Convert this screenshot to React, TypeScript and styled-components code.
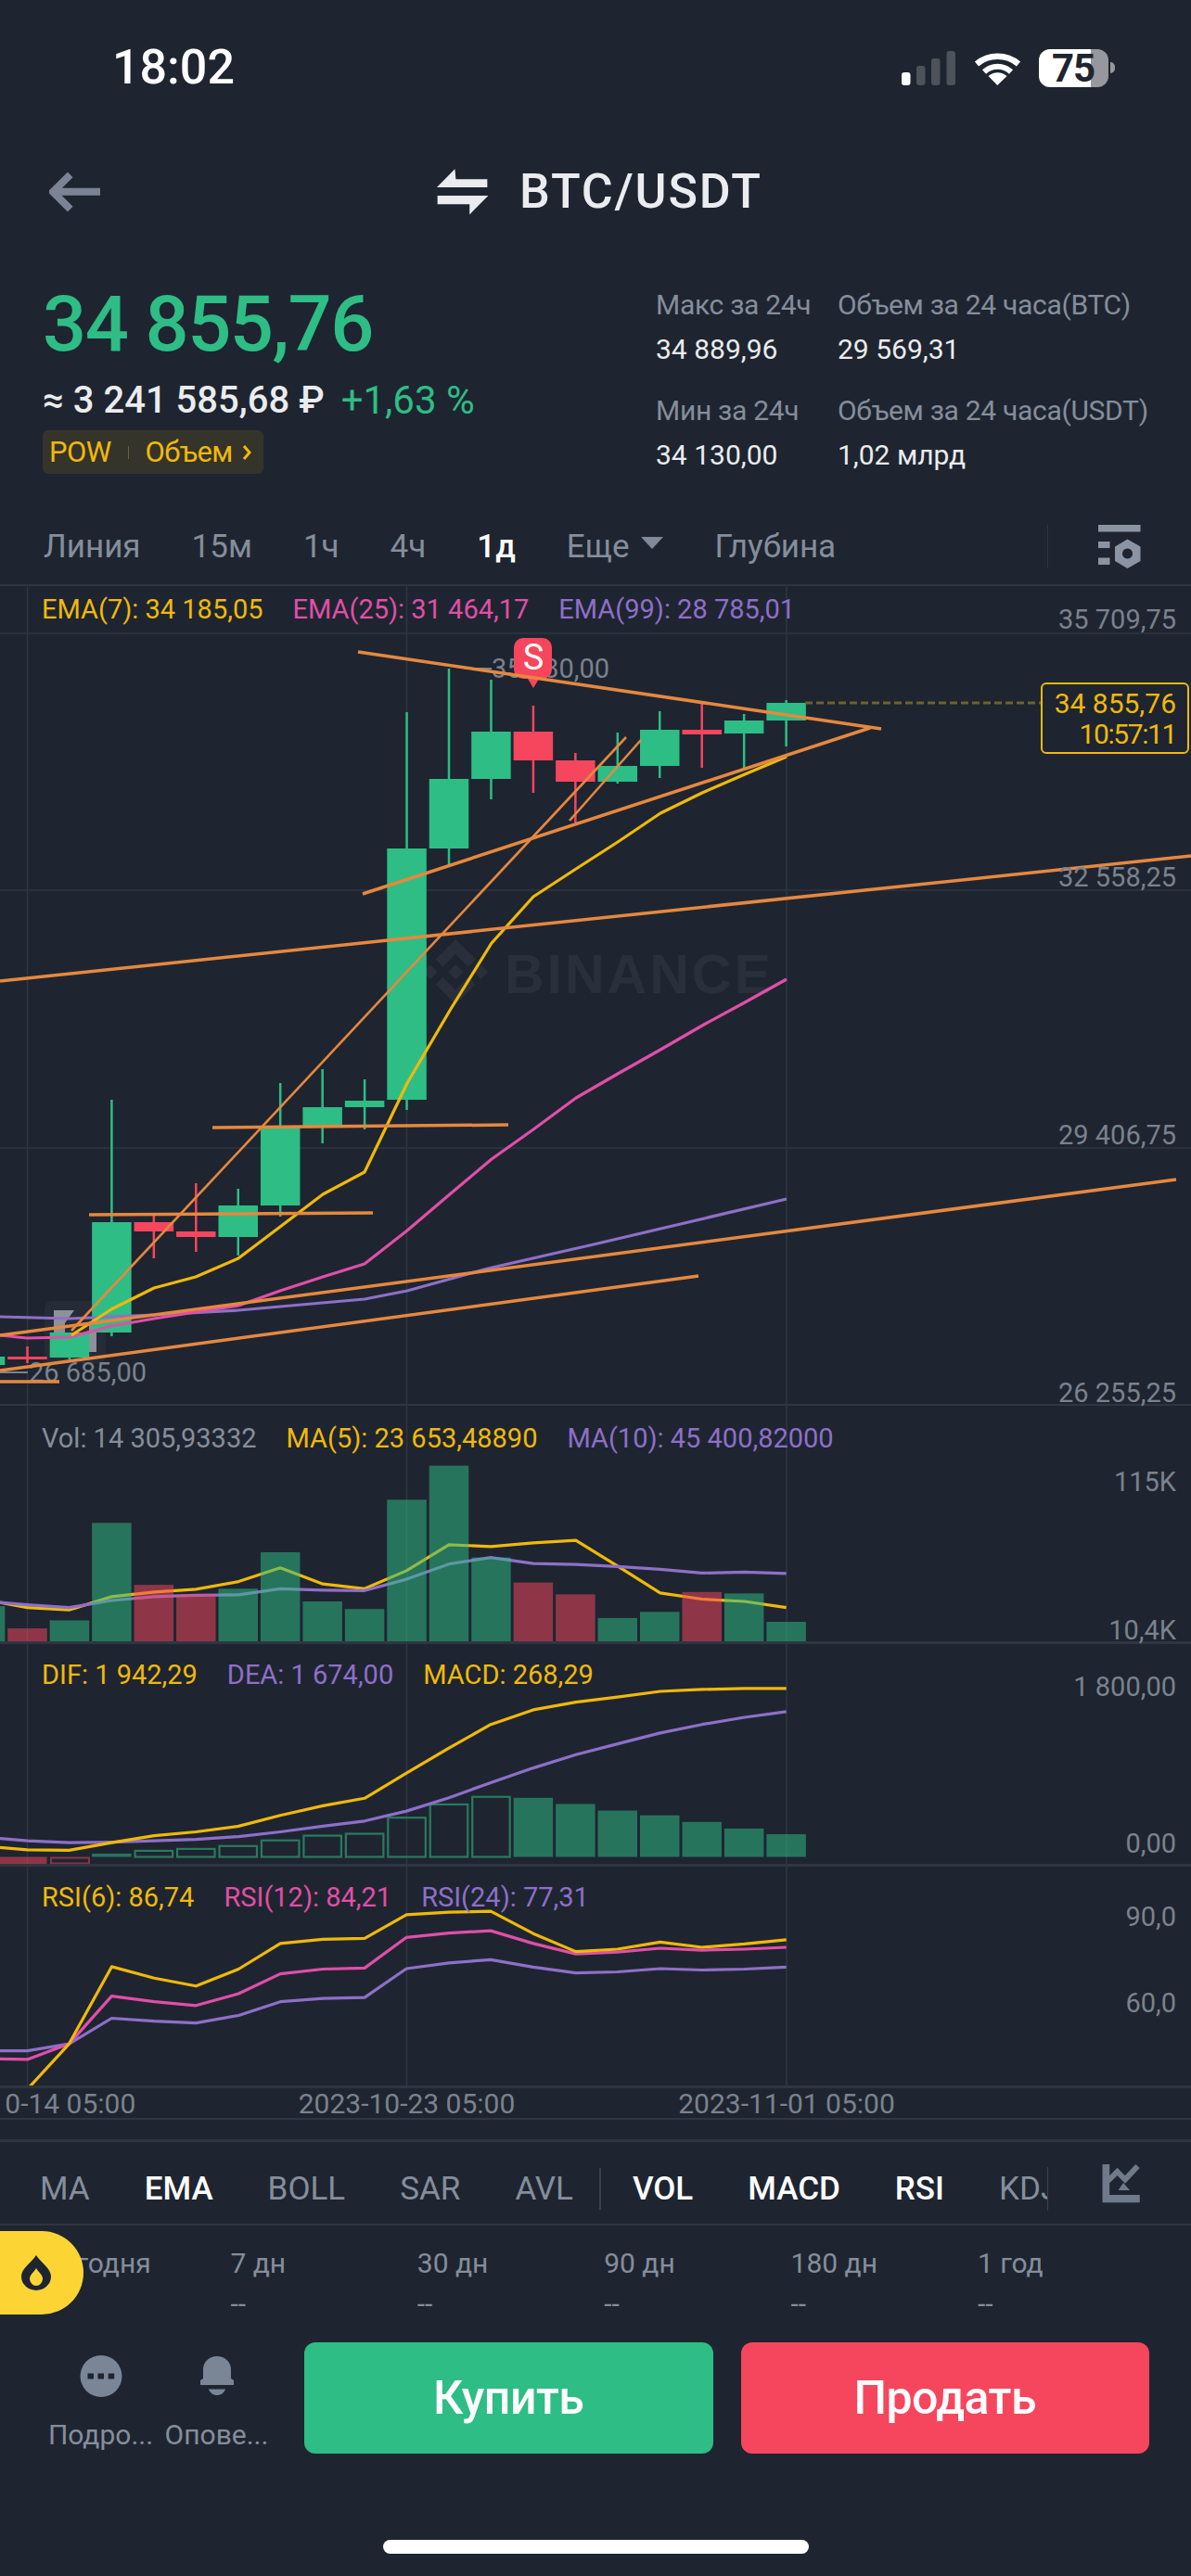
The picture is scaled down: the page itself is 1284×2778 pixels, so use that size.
import React from "react";
import styled, { createGlobalStyle } from "styled-components";

const BG = "#1e2530";
const GRID = "#2f3641";
const MUTED = "#848e9c";
const AXIS = "#7a828e";
const WHITE = "#eaecef";
const GREEN = "#2ebd85";
const RED = "#f6465d";
const YELLOW = "#f0b90b";
const PINK = "#e04fa8";
const PURPLE = "#8e6fc9";
const ORANGE = "#e6883f";

const GlobalStyle = createGlobalStyle`
  html, body { margin: 0; padding: 0; background: ${BG}; }
  #root { width: 1284px; }
  * { box-sizing: border-box; }
`;

const Page = styled.div`
  position: relative;
  width: 1284px;
  height: 2778px;
  overflow: hidden;
  background: ${BG};
  color: ${WHITE};
  font-family: Roboto, "Liberation Sans", sans-serif;
`;

/* Status bar */
const StatusBar = styled.header`
  height: 146px;
  display: flex;
  align-items: center;
  padding: 0 82px 0 121px;
`;
const Clock = styled.div`
  font-size: 52px;
  font-weight: 500;
  color: #fff;
  line-height: 1;
  margin-right: auto;
`;
const SignalBars = styled.svg`
  width: 58px;
  height: 37px;
  margin-right: 20px;
`;
const WifiIcon = styled.svg`
  width: 51px;
  height: 37px;
  margin-right: 19px;
`;
const Battery = styled.div`
  width: 75px;
  height: 41px;
  border-radius: 12px;
  background: linear-gradient(90deg, #fff 0 75%, #96989d 75% 100%);
  color: ${BG};
  font-size: 42px;
  font-weight: 700;
  font-stretch: 88%;
  line-height: 41px;
  padding-left: 14px;
  letter-spacing: -1px;
`;
const BatteryTip = styled.div`
  width: 5px;
  height: 12px;
  margin-left: 2px;
  border-radius: 0 6px 6px 0;
  background: #96989d;
`;

/* Nav */
const NavBar = styled.nav`
  height: 122px;
  padding-left: 53px;
  display: flex;
  align-items: center;
`;
const BackIcon = styled.svg`
  width: 57px;
  height: 42px;
  margin-right: 361px;
`;
const SwapIcon = styled.svg`
  width: 56px;
  height: 50px;
  margin-right: 33px;
`;
const PairTitle = styled.h1`
  margin: 0;
  font-size: 52px;
  font-weight: 500;
  letter-spacing: 1.8px;
  line-height: 1;
  color: ${WHITE};
`;

/* Ticker */
const Ticker = styled.section`
  height: 272px;
  display: flex;
  padding-left: 46px;
`;
const PriceBlock = styled.div`
  width: 661px;
  padding-top: 40px;
`;
const Price = styled.div`
  font-size: 83px;
  line-height: 84px;
  font-weight: 500;
  font-stretch: 92%;
  letter-spacing: -1.5px;
  color: ${GREEN};
`;
const SubPrice = styled.div`
  margin-top: 18px;
  display: flex;
  gap: 18px;
  font-size: 40px;
  line-height: 44px;
`;
const Fiat = styled.span`
  color: ${WHITE};
  font-stretch: 96%;
  font-weight: 500;
`;
const Change = styled.span`
  color: ${GREEN};
  font-size: 42px;
`;
const TagBadge = styled.div`
  margin-top: 10px;
  width: 238px;
  height: 47px;
  border-radius: 6px;
  padding: 0 13px 0 7px;
  background: #35342b;
  display: flex;
  align-items: center;
  color: ${YELLOW};
  font-size: 31px;
  font-stretch: 90%;
  letter-spacing: -0.6px;
`;
const BadgeSep = styled.span`
  width: 1px;
  height: 14px;
  margin: 0 18px;
  background: #6d6230;
`;
const Chevron = styled.svg`
  width: 10px;
  height: 18px;
  margin-left: auto;
`;
const StatGrid = styled.div`
  padding-top: 45px;
  display: grid;
  grid-template-columns: 196px auto;
  align-content: start;
  row-gap: 34px;
`;
const StatCell = styled.div`
  display: flex;
  flex-direction: column;
  gap: 16px;
`;
const StatLabel = styled.span`
  color: ${MUTED};
  font-size: 30px;
  font-stretch: 93%;
  letter-spacing: -0.3px;
  line-height: 32px;
  white-space: nowrap;
`;
const StatValue = styled.span`
  color: ${WHITE};
  font-size: 30px;
  font-stretch: 94%;
  line-height: 32px;
  white-space: nowrap;
`;

/* Tabs */
const TabsBar = styled.div`
  height: 92px;
  padding: 8px 54px 0 47px;
  display: flex;
  align-items: center;
  gap: 55px;
  border-bottom: 2px solid ${GRID};
`;
const Tab = styled.span<{ $active?: boolean }>`
  font-size: 35px;
  font-stretch: 96%;
  line-height: 1;
  color: ${(p) => (p.$active ? "#fff" : MUTED)};
  font-weight: ${(p) => (p.$active ? 500 : 400)};
  white-space: nowrap;
`;
const TabWithCaret = styled.span`
  display: flex;
  align-items: center;
  gap: 13px;
`;
const Caret = styled.span`
  width: 0;
  height: 0;
  border-left: 12px solid transparent;
  border-right: 12px solid transparent;
  border-top: 13px solid #808a98;
  margin-bottom: 8px;
`;
const ToolDivider = styled.span`
  width: 1px;
  height: 47px;
  background: ${GRID};
  margin-left: auto;
  margin-right: -1px;
`;
const ToolIcon = styled.svg`
  width: 46px;
  height: 47px;
  flex: none;
`;

/* Chart panes */
const Pane = styled.div<{ $h: number; $line?: number }>`
  position: relative;
  height: ${(p) => p.$h}px;
  border-bottom: ${(p) => p.$line ?? 2}px solid ${GRID};
`;
const ChartSvg = styled.svg<{ $h: number }>`
  position: absolute;
  left: 0;
  top: 0;
  width: 1284px;
  height: ${(p) => p.$h}px;
`;
const Legend = styled.div<{ $top: number }>`
  position: relative;
  padding: ${(p) => p.$top}px 0 0 45px;
  display: flex;
  gap: 32px;
  font-size: 29px;
  line-height: 30px;
  white-space: nowrap;
`;
const LegendItem = styled.span<{ $color: string }>`
  color: ${(p) => p.$color};
`;
const AxisLabel = styled.span<{ $y: number }>`
  position: absolute;
  right: 16px;
  top: ${(p) => p.$y}px;
  transform: translateY(-50%);
  font-size: 29px;
  line-height: 24px;
  color: ${AXIS};
  white-space: nowrap;
`;
const PriceTag = styled.div`
  position: absolute;
  right: 2px;
  top: 104px;
  width: 160px;
  height: 77px;
  border: 2px solid ${YELLOW};
  border-radius: 6px;
  padding: 4px 12px 0 0;
  text-align: right;
  color: ${YELLOW};
  font-size: 30px;
  line-height: 33px;
  background: ${BG};
`;
const PriceLine = styled.div<{ $tight?: boolean }>`
  white-space: nowrap;
  letter-spacing: ${(p) => (p.$tight ? "-1.4px" : "0")};
`;
const WatermarkText = styled.text`
  font-family: "Liberation Sans", sans-serif;
  font-size: 59px;
  font-weight: 700;
  letter-spacing: 3px;
  fill: #2a303b;
`;
const ChartLabel = styled.text`
  font-size: 29px;
  fill: ${AXIS};
`;
const MarkerLetter = styled.text`
  font-size: 38px;
  fill: #fff;
  text-anchor: middle;
`;

/* Date row */
const DateRow = styled.div`
  position: relative;
  height: 34px;
  border-bottom: 2px solid ${GRID};
  overflow: hidden;
`;
const DateLabel = styled.span<{ $x: number }>`
  position: absolute;
  left: ${(p) => p.$x}px;
  top: 2px;
  transform: translateX(-50%);
  font-size: 30px;
  line-height: 30px;
  color: ${AXIS};
  white-space: nowrap;
`;

/* Indicator bar */
const IndicatorBar = styled.div`
  margin-top: 21px;
  height: 93px;
  padding: 12px 54px 0 0;
  border-top: 3px solid ${GRID};
  border-bottom: 2px solid ${GRID};
  display: flex;
  align-items: center;
`;
const IndicatorScroll = styled.div`
  width: 1130px;
  flex: none;
  overflow: hidden;
  display: flex;
  align-items: center;
  gap: 59px;
  padding-left: 43px;
  border-right: 1px solid #3a414d;
  height: 47px;
`;
const Indicator = styled.span<{ $active?: boolean }>`
  font-size: 35px;
  font-stretch: 94%;
  line-height: 1;
  color: ${(p) => (p.$active ? "#fff" : MUTED)};
  font-weight: ${(p) => (p.$active ? 500 : 400)};
  white-space: nowrap;
`;
const IndicatorDivider = styled.span`
  flex: none;
  width: 2px;
  height: 45px;
  background: #3a414d;
  margin: 0 -25px 0 -31px;
`;
const IndicatorIcon = styled.svg`
  width: 42px;
  height: 42px;
  margin-left: auto;
  margin-top: -10px;
`;

/* Stats */
const ReturnsRow = styled.div`
  height: 126px;
  padding: 24px 0 0 47px;
  display: grid;
  grid-template-columns: repeat(6, 201.4px);
`;
const ReturnCell = styled.div`
  display: flex;
  flex-direction: column;
  gap: 10px;
`;
const ReturnLabel = styled.span`
  font-size: 30px;
  font-stretch: 95%;
  line-height: 34px;
  color: ${MUTED};
`;
const ReturnValue = styled.span`
  font-size: 30px;
  line-height: 34px;
  color: ${MUTED};
`;
const FireButton = styled.div`
  position: absolute;
  left: 0;
  top: 2406px;
  width: 90px;
  height: 90px;
  border-radius: 0 45px 45px 0;
  background: #fcd535;
  display: flex;
  align-items: center;
  padding-left: 22px;
`;
const DropIcon = styled.svg`
  width: 34px;
  height: 38px;
`;

/* Footer */
const Footer = styled.footer`
  height: 120px;
  padding-left: 46px;
  display: flex;
`;
const ActionItem = styled.div`
  width: 125px;
  padding-top: 14px;
  display: flex;
  flex-direction: column;
  align-items: center;
  gap: 24px;
`;
const ActionIcon = styled.svg`
  width: 46px;
  height: 45px;
`;
const ActionLabel = styled.span`
  font-size: 30px;
  font-stretch: 95%;
  line-height: 34px;
  color: ${MUTED};
  white-space: nowrap;
`;
const TradeButton = styled.button<{ $bg: string; $gap: number }>`
  width: 440.5px;
  height: 120px;
  margin-left: ${(p) => p.$gap}px;
  border: 0;
  border-radius: 12px;
  background: ${(p) => p.$bg};
  color: #fff;
  font-family: inherit;
  font-stretch: 92%;
  font-size: 50px;
  font-weight: 500;
  letter-spacing: -0.5px;
`;
const HomeIndicator = styled.div`
  width: 459px;
  height: 15px;
  margin: 93px auto 0;
  border-radius: 8px;
  background: #fff;
`;

/* Data */
const CX = (i: number) => 29.5 + 45.45 * i;
type Candle = [number, number, number, number, number, "g" | "r"];
const candles: Candle[] = [
  [-1, 1463, 1472, 1460, 1475, "g"],
  [0, 1463, 1466, 1452, 1470, "r"],
  [1, 1437, 1464, 1437, 1466, "g"],
  [2, 1318, 1437, 1186, 1441, "g"],
  [3, 1318, 1328, 1311, 1357, "r"],
  [4, 1328, 1334, 1276, 1350, "r"],
  [5, 1300, 1334, 1282, 1354, "g"],
  [6, 1216, 1300, 1168, 1312, "g"],
  [7, 1194, 1216, 1153, 1233, "g"],
  [8, 1187, 1194, 1164, 1218, "g"],
  [9, 915, 1186, 768, 1197, "g"],
  [10, 840, 915, 721, 934, "g"],
  [11, 789, 840, 733, 862, "g"],
  [12, 789, 820, 761, 855, "r"],
  [13, 820, 843, 812, 887, "r"],
  [14, 826, 843, 790, 845, "g"],
  [15, 787, 826, 767, 839, "g"],
  [16, 787, 792, 759, 828, "r"],
  [17, 777, 791, 770, 828, "g"],
  [18, 758, 777, 755, 805, "g"],
];

const ema7 = "77,1440 120,1412 166,1389 211,1377 257,1357 302,1323 348,1288 393,1264 439,1168 486,1088 530,1017 575,967 621,937 666,908 712,877 757,855 803,835 848,816";
const ema25 = "0,1440 29,1443 75,1442 120,1430 166,1422 211,1415 257,1408 302,1392 348,1377 393,1363 439,1327 486,1287 530,1250 575,1218 621,1184 666,1158 712,1132 757,1106 803,1081 848,1056";
const ema99 = "0,1420 75,1422 166,1418 257,1413 393,1401 439,1392 526,1368 640,1342 848,1293";

const orangeThick: [number, number, number, number][] = [
  [386, 703, 950, 786],
  [391, 964, 938, 785],
  [0, 1058, 1284, 923],
  [0, 1440, 1268, 1272],
  [0, 1478, 753, 1376],
  [96, 1310, 402, 1308],
  [229, 1216, 548, 1213],
  [0, 1490, 64, 1490],
];
const orangeThin: [number, number, number, number][] = [
  [77, 1435, 675, 795],
  [614, 885, 691, 798],
];

const LX = (zx: number) => zx / 1.221;
const LY = (zy: number) => 1500 + zy / 1.96;
const poly = (pts: number[][]) => pts.map(([x, y]) => `${LX(x).toFixed(1)},${LY(y).toFixed(1)}`).join(" ");

const volBars: [number, number, "g" | "r"][] = [
  [-1, 455, "g"], [0, 502, "r"], [1, 485, "g"], [2, 279, "g"], [3, 410, "r"], [4, 430, "r"],
  [5, 418, "g"], [6, 341, "g"], [7, 445, "g"], [8, 461, "g"], [9, 230, "g"], [10, 158, "g"],
  [11, 352, "g"], [12, 405, "r"], [13, 430, "r"], [14, 480, "g"], [15, 467, "g"], [16, 425, "r"],
  [17, 428, "g"], [18, 488, "g"],
];
const volMa5 = [[0,447],[36,458],[91,463],[147,435],[203,425],[258,419],[314,403],[369,374],[425,408],[480,418],[535,380],[591,325],[646,329],[702,321],[758,316],[813,370],[869,427],[924,440],[980,445],[1035,458]];
const volMa10 = [[0,447],[36,452],[91,458],[147,443],[203,435],[258,432],[314,431],[369,418],[425,421],[480,422],[535,398],[591,366],[646,352],[702,365],[758,367],[813,371],[869,377],[924,385],[980,383],[1035,386]];

const macdBars: [number, number, boolean][] = [
  [2, 978, true], [3, 972, false], [4, 968, false], [5, 962, false], [6, 950, false], [7, 940, false],
  [8, 936, false], [9, 902, false], [10, 874, false], [11, 858, false], [12, 860, true], [13, 873, true],
  [14, 887, true], [15, 897, true], [16, 911, true], [17, 925, true], [18, 937, true],
];
const dif = [[0,965],[36,970],[91,971],[147,955],[203,940],[258,932],[314,920],[369,897],[425,877],[480,861],[535,808],[591,755],[646,705],[702,674],[758,658],[813,647],[869,635],[924,631],[980,629],[1035,629]];
const dea = [[0,946],[36,951],[91,955],[147,954],[203,951],[258,948],[314,942],[369,932],[425,920],[480,909],[535,888],[591,860],[646,828],[702,797],[758,769],[813,746],[869,723],[924,705],[980,690],[1035,678]];

const rsi6 = [[0,1474],[36,1476],[91,1380],[147,1217],[203,1241],[258,1258],[314,1222],[369,1168],[425,1159],[480,1157],[535,1107],[591,1102],[646,1100],[702,1147],[758,1185],[813,1180],[869,1165],[924,1176],[980,1169],[1035,1160]];
const rsi12 = [[0,1412],[36,1413],[91,1380],[147,1279],[203,1291],[258,1299],[314,1274],[369,1232],[425,1222],[480,1220],[535,1155],[591,1146],[646,1141],[702,1168],[758,1190],[813,1186],[869,1178],[924,1182],[980,1180],[1035,1176]];
const rsi24 = [[0,1395],[36,1395],[91,1380],[147,1326],[203,1332],[258,1336],[314,1320],[369,1291],[425,1284],[480,1282],[535,1221],[591,1209],[646,1202],[702,1218],[758,1230],[813,1228],[869,1221],[924,1224],[980,1222],[1035,1218]];

const VGrid = ({ y1, y2 }: { y1: number; y2: number }) => (
  <g stroke={GRID} strokeWidth={1.5}>
    {[29.5, 438.5, 848].map((x) => (
      <line key={x} x1={x} x2={x} y1={y1} y2={y2} />
    ))}
  </g>
);

const Line = ({ points, color, w = 3.2 }: { points: string; color: string; w?: number }) => (
  <polyline points={points} fill="none" stroke={color} strokeWidth={w} strokeLinejoin="round" />
);

const MainChart = () => (
  <ChartSvg $h={882} viewBox="0 632 1284 882">
    <VGrid y1={632} y2={1516} />
    <g stroke={GRID} strokeWidth={1.5}>
      {[683, 960, 1238].map((y) => (
        <line key={y} x1={0} x2={1284} y1={y} y2={y} />
      ))}
    </g>
    <g fill="#2a303b" transform="translate(456 1013) scale(0.555)">
      <path d="M38.73 53.2l24.59-24.58 24.6 24.6 14.3-14.31L63.32 0 24.43 38.9z" />
      <path d="M0 63.31l14.3-14.31 14.31 14.31-14.31 14.3z" />
      <path d="M38.73 73.41l24.59 24.59 24.6-24.6 14.31 14.29-38.9 38.91-38.91-38.88-.02-.02z" />
      <path d="M98 63.31l14.3-14.31 14.31 14.3-14.31 14.31z" />
      <path d="M77.83 63.3L63.32 48.78 52.59 59.51l-1.24 1.23-2.54 2.54 14.51 14.5 14.51-14.47z" />
    </g>
    <WatermarkText x={544} y={1071}>BINANCE</WatermarkText>
    <rect x={48} y={1403} width={66} height={67} rx={8} fill="#262c37" />
    <path d="M58 1413h22l-10 14v30H58z" fill="#8c919a" />
    <rect x={96} y={1425} width={8} height={33} fill="#8c919a" />
    <line x1={501} x2={530} y1={721} y2={721} stroke={AXIS} strokeWidth={2} />
    <ChartLabel x={530} y={731}>35 280,00</ChartLabel>
    <line x1={0} x2={30} y1={1480} y2={1480} stroke={AXIS} strokeWidth={2} />
    <ChartLabel x={31} y={1490}>26 685,00</ChartLabel>
    {candles.map(([i, top, bot, wt, wb, c]) => {
      const col = c === "g" ? GREEN : RED;
      const x = CX(i);
      return (
        <g key={i} fill={col}>
          <rect x={x - 1.25} y={wt} width={2.5} height={wb - wt} />
          <rect x={x - 21.25} y={top} width={42.5} height={bot - top} />
        </g>
      );
    })}
    <line x1={868} x2={1122} y1={758} y2={758} stroke="#6d6330" strokeWidth={3} strokeDasharray="8 4" />
    <Line points={ema99} color={PURPLE} />
    <Line points={ema25} color={PINK} />
    <Line points={ema7} color={YELLOW} />
    <path d="M564 688h21a10 10 0 0 1 10 10v24a10 10 0 0 1-10 10h-4l-6 10-6-10h-5a10 10 0 0 1-10-10v-24a10 10 0 0 1 10-10z" fill={RED} />
    <MarkerLetter x={575} y={722}>S</MarkerLetter>
    <g stroke={ORANGE} strokeWidth={3.5}>
      {orangeThick.map(([a, b, c, d]) => (
        <line key={`${a}-${b}`} x1={a} y1={b} x2={c} y2={d} />
      ))}
    </g>
    <g stroke={ORANGE} strokeWidth={2.6}>
      {orangeThin.map(([a, b, c, d]) => (
        <line key={`${a}-${b}`} x1={a} y1={b} x2={c} y2={d} />
      ))}
    </g>
  </ChartSvg>
);

const VolumeChart = () => (
  <ChartSvg $h={254} viewBox="0 1516 1284 254">
    <VGrid y1={1516} y2={1773} />
    <Line points={poly(volMa5)} color={YELLOW} />
    <Line points={poly(volMa10)} color={PURPLE} />
    {volBars.map(([i, top, c]) => (
      <rect
        key={i}
        x={CX(i) - 21.25}
        y={LY(top)}
        width={42.5}
        height={1773 - LY(top)}
        fill={c === "g" ? GREEN : RED}
        opacity={0.52}
      />
    ))}
  </ChartSvg>
);

const MacdChart = () => (
  <ChartSvg $h={237} viewBox="0 1773 1284 237">
    <VGrid y1={1773} y2={2013} />
    <rect x={-20} y={2002.5} width={70.5} height={9} fill={RED} opacity={0.52} />
    <rect x={55} y={2003.5} width={41} height={6} fill="none" stroke="#8a3443" strokeWidth={2} />
    {macdBars.map(([i, top, filled]) => {
      const y = LY(top);
      return filled ? (
        <rect key={i} x={CX(i) - 21.25} y={y} width={42.5} height={2002.5 - y} fill={GREEN} opacity={0.52} />
      ) : (
        <rect key={i} x={CX(i) - 20.25} y={y} width={40.5} height={2002.5 - y} fill="none" stroke="#2a7a60" strokeWidth={2.2} />
      );
    })}
    <Line points={poly(dea)} color={PURPLE} />
    <Line points={poly(dif)} color={YELLOW} />
  </ChartSvg>
);

const RsiChart = () => (
  <ChartSvg $h={236} viewBox="0 2013 1284 236">
    <VGrid y1={2013} y2={2252} />
    <Line points={poly(rsi24)} color={PURPLE} />
    <Line points={poly(rsi12)} color={PINK} />
    <Line points={poly(rsi6)} color={YELLOW} />
  </ChartSvg>
);

export default function App() {
  return (
    <Page>
      <GlobalStyle />
      <StatusBar>
        <Clock>18:02</Clock>
        <SignalBars viewBox="0 0 58 37">
          <rect x="0" y="23" width="9.5" height="14" rx="3" fill="#fff" />
          <rect x="16" y="16" width="9.5" height="21" rx="3" fill="#4d525b" />
          <rect x="32" y="8" width="9.5" height="29" rx="3" fill="#4d525b" />
          <rect x="48.5" y="0" width="9.5" height="37" rx="3" fill="#4d525b" />
        </SignalBars>
        <WifiIcon viewBox="90 14 51 37">
          <path d="M93 28A35 35 0 0 1 138 28" fill="none" stroke="#fff" strokeWidth="6.5" />
          <path d="M101 36.500A21 21 0 0 1 130 36.500" fill="none" stroke="#fff" strokeWidth="6" />
          <path d="M115.300 51L105.500 41A15 15 0 0 1 125.500 41Z" fill="#fff" />
        </WifiIcon>
        <Battery>75</Battery>
        <BatteryTip />
      </StatusBar>

      <NavBar>
        <BackIcon viewBox="40 48 170 125">
          <path d="M108 55L52 110L108 166M52 110H204" fill="none" stroke="#7b8494" strokeWidth="24" />
        </BackIcon>
        <SwapIcon viewBox="1290 37 170 150">
          <path d="M1290 97L1349 37L1352 70H1455V97Z" fill={WHITE} />
          <path d="M1292 124H1458L1397 186V152H1292Z" fill={WHITE} />
        </SwapIcon>
        <PairTitle>BTC/USDT</PairTitle>
      </NavBar>

      <Ticker>
        <PriceBlock>
          <Price>34 855,76</Price>
          <SubPrice>
            <Fiat>≈ 3 241 585,68 ₽</Fiat>
            <Change>+1,63 %</Change>
          </SubPrice>
          <TagBadge>
            POW
            <BadgeSep />
            Объем
            <Chevron viewBox="0 0 10 18">
              <path d="M2 2l6 7-6 7" fill="none" stroke={YELLOW} strokeWidth="3" />
            </Chevron>
          </TagBadge>
        </PriceBlock>
        <StatGrid>
          <StatCell>
            <StatLabel>Макс за 24ч</StatLabel>
            <StatValue>34 889,96</StatValue>
          </StatCell>
          <StatCell>
            <StatLabel>Объем за 24 часа(BTC)</StatLabel>
            <StatValue>29 569,31</StatValue>
          </StatCell>
          <StatCell>
            <StatLabel>Мин за 24ч</StatLabel>
            <StatValue>34 130,00</StatValue>
          </StatCell>
          <StatCell>
            <StatLabel>Объем за 24 часа(USDT)</StatLabel>
            <StatValue>1,02 млрд</StatValue>
          </StatCell>
        </StatGrid>
      </Ticker>

      <TabsBar>
        <Tab>Линия</Tab>
        <Tab>15м</Tab>
        <Tab>1ч</Tab>
        <Tab>4ч</Tab>
        <Tab $active>1д</Tab>
        <TabWithCaret>
          <Tab>Еще</Tab>
          <Caret />
        </TabWithCaret>
        <Tab>Глубина</Tab>
        <ToolDivider />
        <ToolIcon viewBox="0 0 46 47">
          <rect x="0" y="0" width="45.500" height="7.500" fill="#8a94a3" />
          <rect x="0" y="18" width="12.500" height="7" fill="#8a94a3" />
          <rect x="0" y="35.500" width="12.500" height="7.500" fill="#8a94a3" />
          <path fillRule="evenodd" d="M31.500 15.500L45.500 23.500V39L31.500 47L18 39V23.500ZM31.500 25.500a5.500 5.500 0 1 0 .01 0Z" fill="#8a94a3" />
        </ToolIcon>
      </TabsBar>

      <Pane $h={884}>
        <MainChart />
        <Legend $top={10}>
          <LegendItem $color={YELLOW}>EMA(7): 34 185,05</LegendItem>
          <LegendItem $color={PINK}>EMA(25): 31 464,17</LegendItem>
          <LegendItem $color={PURPLE}>EMA(99): 28 785,01</LegendItem>
        </Legend>
        <AxisLabel $y={36}>35 709,75</AxisLabel>
        <AxisLabel $y={314}>32 558,25</AxisLabel>
        <AxisLabel $y={592}>29 406,75</AxisLabel>
        <AxisLabel $y={870}>26 255,25</AxisLabel>
        <PriceTag>
          <PriceLine>34 855,76</PriceLine>
          <PriceLine $tight>10:57:11</PriceLine>
        </PriceTag>
      </Pane>

      <Pane $h={257} $line={3}>
        <VolumeChart />
        <Legend $top={20}>
          <LegendItem $color={MUTED}>Vol: 14 305,93332</LegendItem>
          <LegendItem $color={YELLOW}>MA(5): 23 653,48890</LegendItem>
          <LegendItem $color={PURPLE}>MA(10): 45 400,82000</LegendItem>
        </Legend>
        <AxisLabel $y={82}>115K</AxisLabel>
        <AxisLabel $y={242}>10,4K</AxisLabel>
      </Pane>

      <Pane $h={240} $line={3}>
        <MacdChart />
        <Legend $top={18}>
          <LegendItem $color={YELLOW}>DIF: 1 942,29</LegendItem>
          <LegendItem $color={PURPLE}>DEA: 1 674,00</LegendItem>
          <LegendItem $color={YELLOW}>MACD: 268,29</LegendItem>
        </Legend>
        <AxisLabel $y={46}>1 800,00</AxisLabel>
        <AxisLabel $y={215}>0,00</AxisLabel>
      </Pane>

      <Pane $h={239} $line={3}>
        <RsiChart />
        <Legend $top={18}>
          <LegendItem $color={YELLOW}>RSI(6): 86,74</LegendItem>
          <LegendItem $color={PINK}>RSI(12): 84,21</LegendItem>
          <LegendItem $color={PURPLE}>RSI(24): 77,31</LegendItem>
        </Legend>
        <AxisLabel $y={54}>90,0</AxisLabel>
        <AxisLabel $y={147}>60,0</AxisLabel>
      </Pane>

      <DateRow>
        <DateLabel $x={29.5}>2023-10-14 05:00</DateLabel>
        <DateLabel $x={438.5}>2023-10-23 05:00</DateLabel>
        <DateLabel $x={848}>2023-11-01 05:00</DateLabel>
      </DateRow>

      <IndicatorBar>
        <IndicatorScroll>
          <Indicator>MA</Indicator>
          <Indicator $active>EMA</Indicator>
          <Indicator>BOLL</Indicator>
          <Indicator>SAR</Indicator>
          <Indicator>AVL</Indicator>
          <IndicatorDivider />
          <Indicator $active>VOL</Indicator>
          <Indicator $active>MACD</Indicator>
          <Indicator $active>RSI</Indicator>
          <Indicator>KDJ</Indicator>
        </IndicatorScroll>
        <IndicatorIcon viewBox="19 17 41 42">
          <path d="M19 17h7.700v33h32.600v8.300H19z" fill="#6f7a8a" />
          <path d="M25 35L35 25L43.500 33.500L57 19" fill="none" stroke="#6f7a8a" strokeWidth="6" />
          <path d="M41.500 37L36 45H48.500Z" fill="#6f7a8a" />
        </IndicatorIcon>
      </IndicatorBar>

      <ReturnsRow>
        {[
          ["Сегодня", ""],
          ["7 дн", "--"],
          ["30 дн", "--"],
          ["90 дн", "--"],
          ["180 дн", "--"],
          ["1 год", "--"],
        ].map(([label, value]) => (
          <ReturnCell key={label}>
            <ReturnLabel>{label}</ReturnLabel>
            <ReturnValue>{value}</ReturnValue>
          </ReturnCell>
        ))}
      </ReturnsRow>
      <FireButton>
        <DropIcon viewBox="0 0 34 38">
          <path d="M17 0C22 8 33 14 33 23A16 15 0 0 1 1 23C1 14 12 8 17 0Z" fill="#1e2530" />
          <path d="M17 14C19 18 24 21 24 25.500A7 7.500 0 0 1 10 25.500C10 21 15 18 17 14Z" fill="#fcd535" />
        </DropIcon>
      </FireButton>

      <Footer>
        <ActionItem>
          <ActionIcon viewBox="0 0 46 45">
            <circle cx="23" cy="22.500" r="22.500" fill="#7a8596" />
            <rect x="8.500" y="19.500" width="6.500" height="6" fill={BG} />
            <rect x="19.500" y="19.500" width="6.500" height="6" fill={BG} />
            <rect x="30.700" y="19.500" width="6.500" height="6" fill={BG} />
          </ActionIcon>
          <ActionLabel>Подро...</ActionLabel>
        </ActionItem>
        <ActionItem>
          <ActionIcon viewBox="0 0 46 45">
            <path d="M8 25V15C8 7 15 1 23 1S38 7 38 15V25L41 27V32H5V27Z" fill="#7a8596" />
            <path d="M13.800 36.500H32.200C30 41 27 43 23 43S16 41 13.800 36.500Z" fill="#7a8596" />
          </ActionIcon>
          <ActionLabel>Опове...</ActionLabel>
        </ActionItem>
        <TradeButton $bg={GREEN} $gap={32}>Купить</TradeButton>
        <TradeButton $bg={RED} $gap={30}>Продать</TradeButton>
      </Footer>
      <HomeIndicator />
    </Page>
  );
}
